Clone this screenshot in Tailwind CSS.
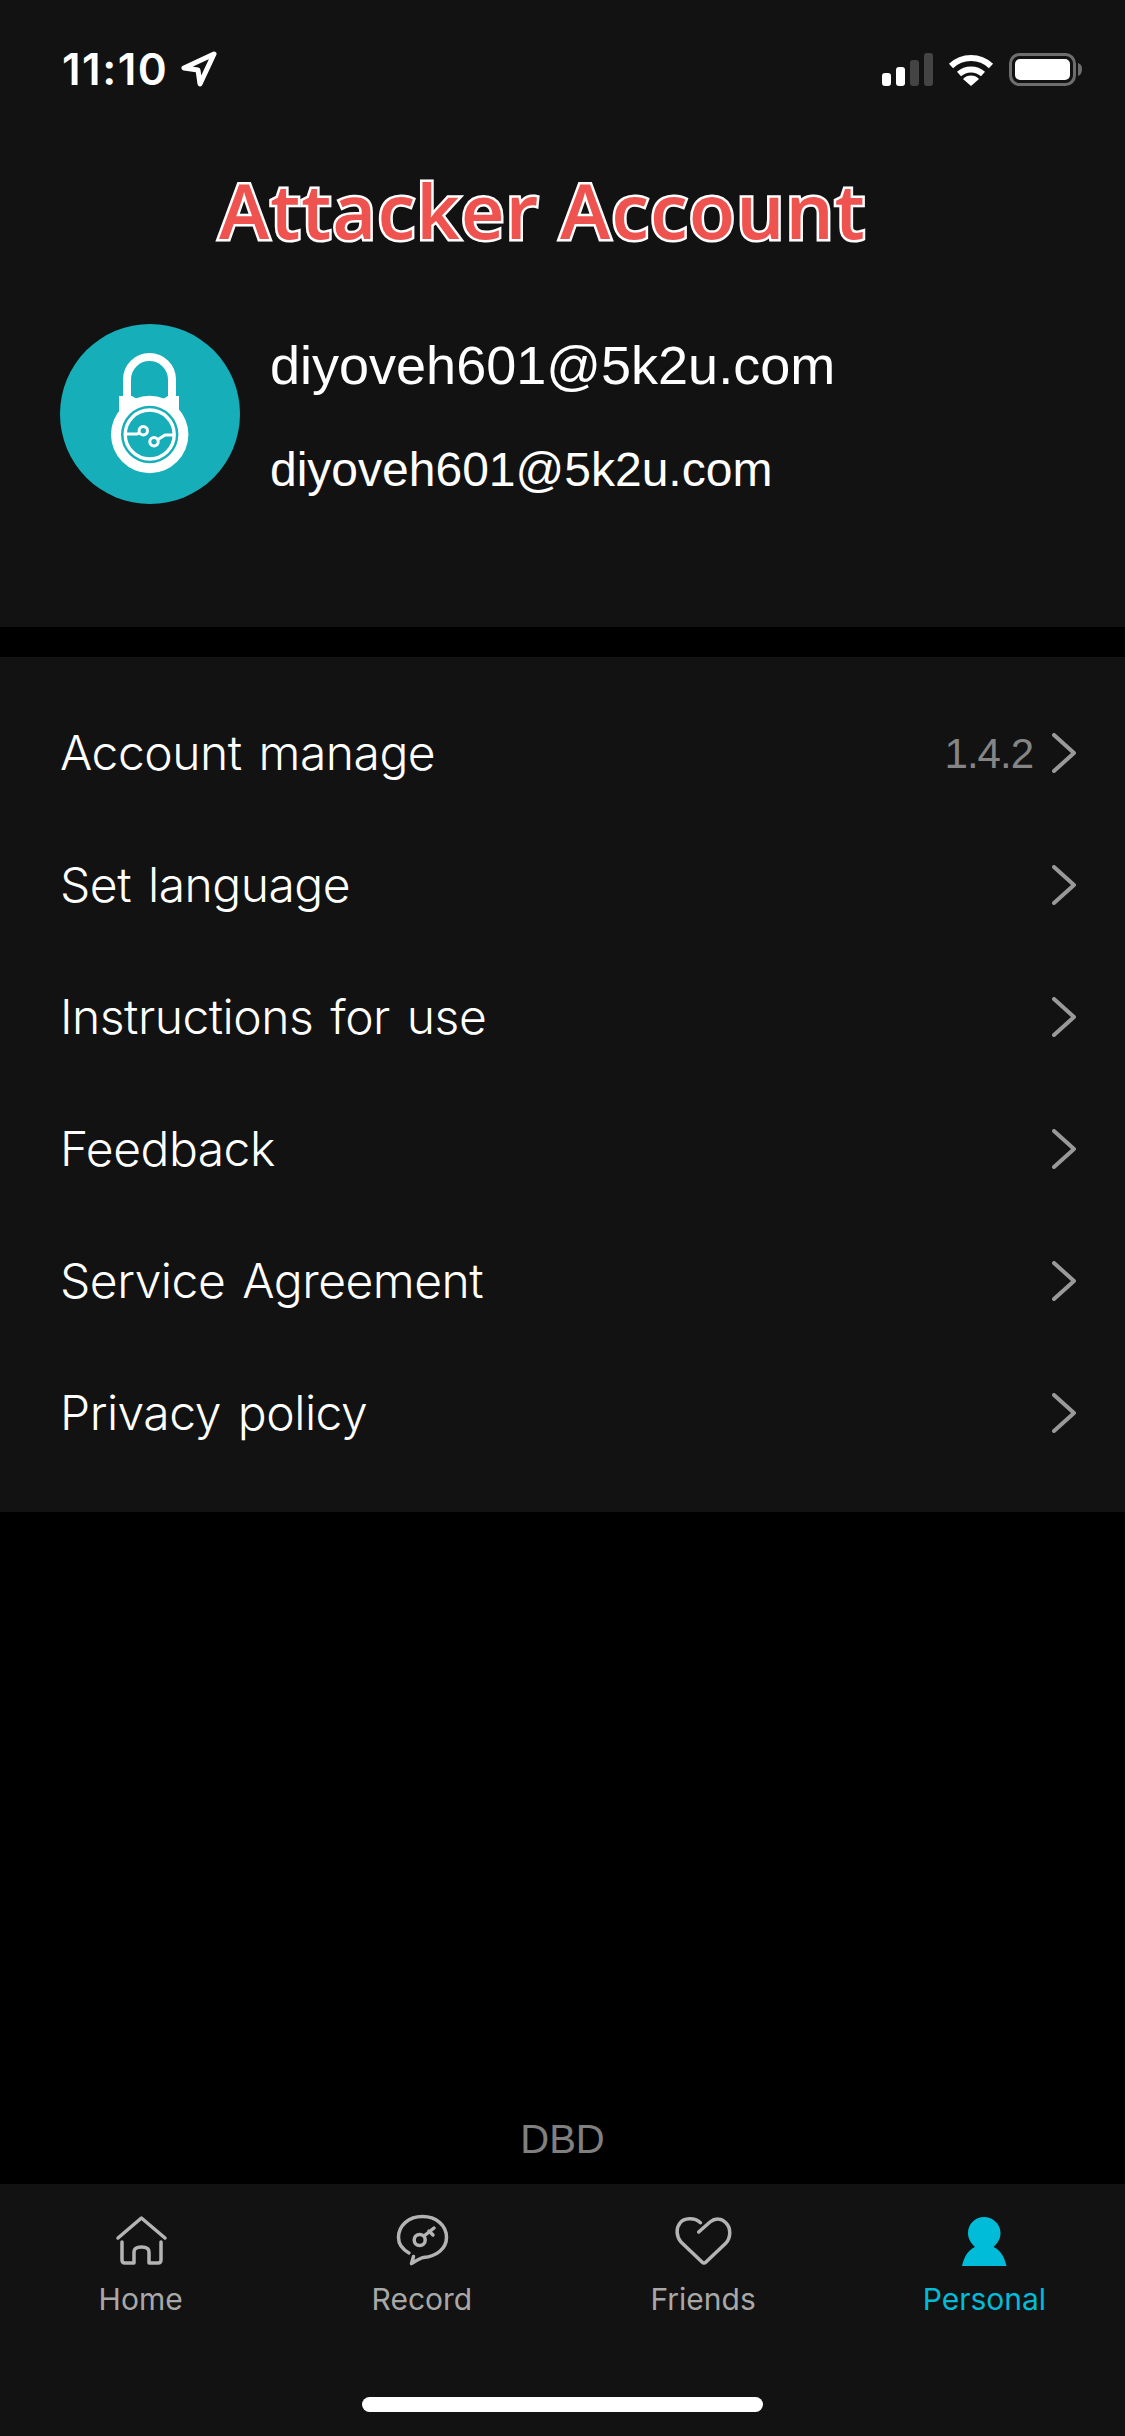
<!DOCTYPE html>
<html lang="en">
<head>
  <meta charset="UTF-8">
  <title>Personal</title>
  <script src="https://cdn.jsdelivr.net/npm/@tailwindcss/browser@4"></script>
</head>
<body class="bg-black text-white font-['Liberation_Sans',sans-serif]">
<div class="w-[1125px] h-[2436px] flex flex-col bg-black">

  <header class="h-[627px] bg-[#121212] flex flex-col">
    <div class="h-[132px] pl-[62px] pr-[42px] pt-[44px] flex justify-between items-start">
      <div class="flex items-center gap-[13px] h-[50px]">
        <span class="font-['Inter',sans-serif] font-semibold text-[44px] leading-[50px] tracking-[1.500px]">11:10</span>
        <svg width="36" height="36" viewBox="0 0 36 36" fill="none" stroke="#fff" stroke-width="5" stroke-linejoin="round"><path d="M33 3 3 17l14 2 2 14z"/></svg>
      </div>
      <div class="flex items-center gap-[15px] h-[50px]">
        <svg width="51" height="33" viewBox="0 0 51 33"><rect x="0" y="20" width="9" height="13" rx="3" fill="#fff"/><rect x="14" y="14" width="9" height="19" rx="3" fill="#fff"/><rect x="28" y="7" width="9" height="26" rx="3" fill="#444"/><rect x="42" y="0" width="9" height="33" rx="3" fill="#444"/></svg>
        <svg width="46" height="33" viewBox="0 0 46 33" fill="none" stroke="#fff" stroke-width="6"><path d="M3 13a29 29 0 0 1 40 0M11 21a18 18 0 0 1 24 0"/><path d="M15 26a11 11 0 0 1 16 0l-8 7z" fill="#fff" stroke="none"/></svg>
        <svg width="74" height="33" viewBox="0 0 74 33"><rect x="1.500" y="1.500" width="64" height="30" rx="9" fill="none" stroke="#6e6e6e" stroke-width="3"/><rect x="6" y="6" width="55" height="21" rx="5" fill="#fff"/><path d="M69 10c3 1 4 3 4 6s-1 6-4 7z" fill="#6e6e6e"/></svg>
      </div>
    </div>
    <h1 class="mt-[36px] ml-[219px] w-[660px] whitespace-nowrap font-['Open_Sans',sans-serif] font-semibold text-[76px] leading-[84px] tracking-[1px] text-[#ef5350] [-webkit-text-stroke:5px_#fff] [paint-order:stroke_fill]">Attacker Account</h1>
    <div class="mt-[72px] pl-[60px] flex items-center gap-[30px]">
      <svg width="180" height="180" viewBox="0 0 180 180" class="shrink-0">
        <circle cx="90" cy="90" r="90" fill="#16afb9"/>
        <path d="M67 72V55.500a22.500 22.500 0 0 1 45 0V72" fill="none" stroke="#fff" stroke-width="8"/>
        <path d="M59 72h13l5 3q13-3 26 0l5-3h11v20H59z" fill="#fff"/>
        <circle cx="89.700" cy="110.500" r="38.700" fill="#fff"/>
        <circle cx="89.700" cy="110.500" r="28.700" fill="#16afb9"/>
        <circle cx="89.700" cy="110.500" r="24.500" fill="none" stroke="#fff" stroke-width="3.400"/>
        <path d="M65 110h12l6-3M114 111h-9l-11 7" fill="none" stroke="#fff" stroke-width="3"/>
        <circle cx="83.300" cy="106.700" r="4.200" fill="#16afb9" stroke="#fff" stroke-width="3"/>
        <circle cx="94" cy="117.700" r="4.200" fill="#16afb9" stroke="#fff" stroke-width="3"/>
      </svg>
      <div class="flex flex-col pt-[4px]">
        <div class="text-[54px] leading-[62px]">diyoveh601@5k2u.com</div>
        <div class="mt-[46px] text-[48px] leading-[56px]">diyoveh601@5k2u.com</div>
      </div>
    </div>
  </header>

  <section class="mt-[30px] h-[855px] py-[30px] bg-[#121212] flex flex-col font-['Inter',sans-serif] font-light text-[48px] tracking-[-0.5px] [word-spacing:4px]">
    <div class="h-[132px] pl-[60px] pr-[49px] flex items-center justify-between">
      <span>Account manage</span>
      <span class="flex items-center gap-[19px] font-['Liberation_Sans',sans-serif] font-normal tracking-[-1px] text-[#858585] text-[42px]">1.4.2
        <svg width="24" height="40" viewBox="0 0 24 40" fill="none" stroke="#999" stroke-width="4" stroke-linecap="round" stroke-linejoin="round"><path d="M2 2l20 18L2 38"/></svg>
      </span>
    </div>
    <div class="h-[132px] pl-[60px] pr-[49px] flex items-center justify-between">
      <span>Set language</span>
      <svg width="24" height="40" viewBox="0 0 24 40" fill="none" stroke="#999" stroke-width="4" stroke-linecap="round" stroke-linejoin="round"><path d="M2 2l20 18L2 38"/></svg>
    </div>
    <div class="h-[132px] pl-[60px] pr-[49px] flex items-center justify-between">
      <span>Instructions for use</span>
      <svg width="24" height="40" viewBox="0 0 24 40" fill="none" stroke="#999" stroke-width="4" stroke-linecap="round" stroke-linejoin="round"><path d="M2 2l20 18L2 38"/></svg>
    </div>
    <div class="h-[132px] pl-[60px] pr-[49px] flex items-center justify-between">
      <span>Feedback</span>
      <svg width="24" height="40" viewBox="0 0 24 40" fill="none" stroke="#999" stroke-width="4" stroke-linecap="round" stroke-linejoin="round"><path d="M2 2l20 18L2 38"/></svg>
    </div>
    <div class="h-[132px] pl-[60px] pr-[49px] flex items-center justify-between">
      <span>Service Agreement</span>
      <svg width="24" height="40" viewBox="0 0 24 40" fill="none" stroke="#999" stroke-width="4" stroke-linecap="round" stroke-linejoin="round"><path d="M2 2l20 18L2 38"/></svg>
    </div>
    <div class="h-[132px] pl-[60px] pr-[49px] flex items-center justify-between">
      <span>Privacy policy</span>
      <svg width="24" height="40" viewBox="0 0 24 40" fill="none" stroke="#999" stroke-width="4" stroke-linecap="round" stroke-linejoin="round"><path d="M2 2l20 18L2 38"/></svg>
    </div>
  </section>

  <div class="flex-1 flex items-end justify-center pb-[22px] text-[40px] leading-[46px] text-[#808080]">DBD</div>

  <nav class="h-[252px] bg-[#121212] relative font-['Inter',sans-serif] text-[30px] leading-[36px] text-[#a8a8a8]">
    <div class="grid grid-cols-4 pt-[29px]">
      <div class="flex flex-col items-center gap-[14px]">
        <svg width="54" height="54" viewBox="0 0 54 54" fill="none" stroke="#b4b4b4" stroke-width="3.500" stroke-linecap="round" stroke-linejoin="round"><path d="M4 25 27.400 5 51 25M8 29v18q0 3 3 3h9V39q0-5 7.500-5T35 39v11h9q3 0 3-3V29"/></svg>
        <span>Home</span>
      </div>
      <div class="flex flex-col items-center gap-[14px]">
        <svg width="54" height="54" viewBox="0 0 54 54" fill="none" stroke="#b4b4b4" stroke-width="3.500" stroke-linecap="round" stroke-linejoin="round"><path d="M14 40C7 36 3.500 31 3.500 24.500 3.500 12 14 3.500 27.500 3.500S51.500 12 51.500 24.500c0 11-10 19-23 20-3 .3-7 3-12 6l2-7"/><circle cx="24.700" cy="27" r="5.500"/><path d="M29 23l10-8M34 18l4 4"/></svg>
        <span>Record</span>
      </div>
      <div class="flex flex-col items-center gap-[14px]">
        <svg width="58" height="54" viewBox="0 0 58 54" fill="none" stroke="#b4b4b4" stroke-width="3.500" stroke-linecap="round" stroke-linejoin="round"><path d="M24.700 19 36 9C41 5 48 5 52 10c5 5 5 14 0 20L32 49q-2 2-4 0L7 29C2 23 2 15 6 10 10 5 20 4 26.500 9.700"/></svg>
        <span>Friends</span>
      </div>
      <div class="flex flex-col items-center gap-[14px] text-[#00bcd9]">
        <svg width="54" height="54" viewBox="0 0 54 54" fill="#00bcd9"><path d="M27 4c9 0 16.500 7 16.500 16 0 6-3 10-7 14 7 3 11 10 13 19H5c2-9 6-16 13-19-4-4-7-8-7-14C11 11 18 4 27 4z"/></svg>
        <span>Personal</span>
      </div>
    </div>
    <div class="absolute left-[362px] bottom-[24px] w-[401px] h-[15px] rounded-full bg-white"></div>
  </nav>
</div>
</body>
</html>
